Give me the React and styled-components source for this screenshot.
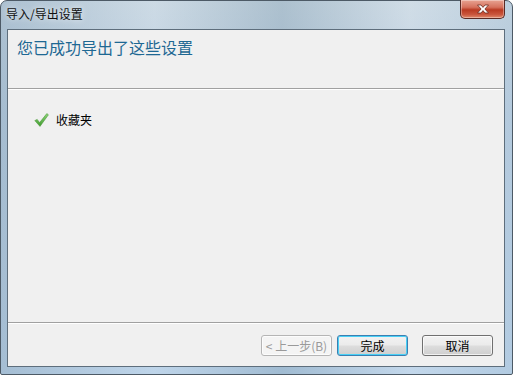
import React from 'react'
import styled, { createGlobalStyle } from 'styled-components'

const Global = createGlobalStyle`
  html, body { margin: 0; padding: 0; }
  body {
    width: 513px;
    height: 375px;
    overflow: hidden;
    background: #ffffff;
    font-family: "Noto Sans CJK SC", "Liberation Sans", sans-serif;
  }
`

const Window = styled.div`
  width: 513px;
  height: 375px;
  box-sizing: border-box;
  display: flex;
  flex-direction: column;
  border: 1px solid #4d5a66;
  border-radius: 7px 7px 2px 2px;
  background:
    linear-gradient(90deg, rgba(150,175,195,0.55) 0%, rgba(220,232,240,0.2) 30%, rgba(120,150,170,0.35) 55%, rgba(230,238,244,0.25) 80%, rgba(170,195,215,0.4) 100%),
    linear-gradient(180deg, #c9d7e2 0%, #b9cde0 30%, #b7d0e8 100%);
`

const TitleBar = styled.div`
  height: 28px;
  display: flex;
  align-items: flex-start;
  padding-left: 5px;
`

const Title = styled.span`
  font-size: 12px;
  line-height: 26px;
  color: #111;
  text-shadow: 0 0 6px rgba(255,255,255,0.9);
`

const CloseButton = styled.div`
  margin-left: auto;
  margin-right: 7px;
  margin-top: -1px;
  width: 45px;
  height: 19px;
  box-sizing: border-box;
  border: 1px solid #5a2a24;
  border-top: none;
  border-radius: 0 0 5px 5px;
  background: linear-gradient(180deg, #e8a392 0%, #d6725e 40%, #b93a22 55%, #c9553c 80%, #e08a6c 100%);
  display: flex;
  align-items: center;
  justify-content: center;
  box-shadow: inset 0 0 0 1px rgba(255,255,255,0.35);
`

const Client = styled.div`
  flex: 1;
  margin: 0 7px 7px 6px;
  border: 1px solid #5e6e7c;
  background: #f0f0f0;
  display: flex;
  flex-direction: column;
`

const Header = styled.div`
  height: 58px;
  box-sizing: border-box;
  padding: 5px 0 0 9px;
`

const Heading = styled.h1`
  margin: 0;
  font-weight: normal;
  font-size: 16px;
  line-height: 24px;
  color: #1e6893;
`

const Divider = styled.div`
  height: 1px;
  background: #a0a0a0;
  box-shadow: 0 1px 0 #ffffff;
`

const Body = styled.div`
  flex: 1;
  padding: 22px 0 0 26px;
`

const Item = styled.div`
  display: flex;
  align-items: center;
  gap: 7px;
  font-size: 12px;
  color: #000;
`

const Footer = styled.div`
  height: 42px;
  display: flex;
  align-items: center;
  justify-content: flex-end;
  padding-right: 11px;
  padding-top: 1px;
`

const Button = styled.button`
  width: ${p => p.$w || 71}px;
  height: 21px;
  margin-left: ${p => p.$gap || 0}px;
  padding: 0;
  box-sizing: border-box;
  font-family: "Noto Sans CJK SC", "Liberation Sans", sans-serif;
  font-size: 12px;
  line-height: 17px;
  border-radius: 3px;
  color: ${p => (p.disabled ? '#9a9a9a' : '#000')};
  border: 1px solid ${p => (p.$primary ? '#3c7fb1' : p.disabled ? '#b5b5b5' : '#707070')};
  background: ${p =>
    p.disabled
      ? '#f4f4f4'
      : 'linear-gradient(180deg, #f2f2f2 0%, #ebebeb 48%, #dddddd 52%, #cfcfcf 100%)'};
  box-shadow: ${p => (p.$primary ? 'inset 0 0 0 1px #48d0f6' : 'inset 0 0 0 1px rgba(255,255,255,0.7)')};
`

const CheckIcon = () => (
  <svg width="15" height="14" viewBox="0 0 15 14">
    <defs>
      <linearGradient id="ck" x1="0" y1="0" x2="0" y2="1">
        <stop offset="0" stopColor="#8fd67a" />
        <stop offset="1" stopColor="#3f9a2e" />
      </linearGradient>
    </defs>
    <path d="M0.8 7.6 L3.2 6.4 L5.6 9.6 L12.8 0.6 L14.4 1.8 L6 13.4 Z" fill="url(#ck)" stroke="#4f9a3e" strokeWidth="0.6" />
  </svg>
)

const CloseGlyph = () => (
  <svg width="14" height="10" viewBox="0 0 14 10">
    <path d="M1.5 1 L5 1 L7 3.4 L9 1 L12.5 1 L8.9 5 L12.5 9 L9 9 L7 6.6 L5 9 L1.5 9 L5.1 5 Z" fill="#ffffff" stroke="#6b2a20" strokeWidth="0.8" />
  </svg>
)

export default function App() {
  return (
    <>
      <Global />
      <Window>
        <TitleBar>
          <Title>导入/导出设置</Title>
          <CloseButton><CloseGlyph /></CloseButton>
        </TitleBar>
        <Client>
          <Header>
            <Heading>您已成功导出了这些设置</Heading>
          </Header>
          <Divider />
          <Body>
            <Item>
              <CheckIcon />
              <span>收藏夹</span>
            </Item>
          </Body>
          <Divider />
          <Footer>
            <Button disabled>&lt; 上一步(B)</Button>
            <Button $primary $gap={5}>完成</Button>
            <Button $gap={14}>取消</Button>
          </Footer>
        </Client>
      </Window>
    </>
  )
}
